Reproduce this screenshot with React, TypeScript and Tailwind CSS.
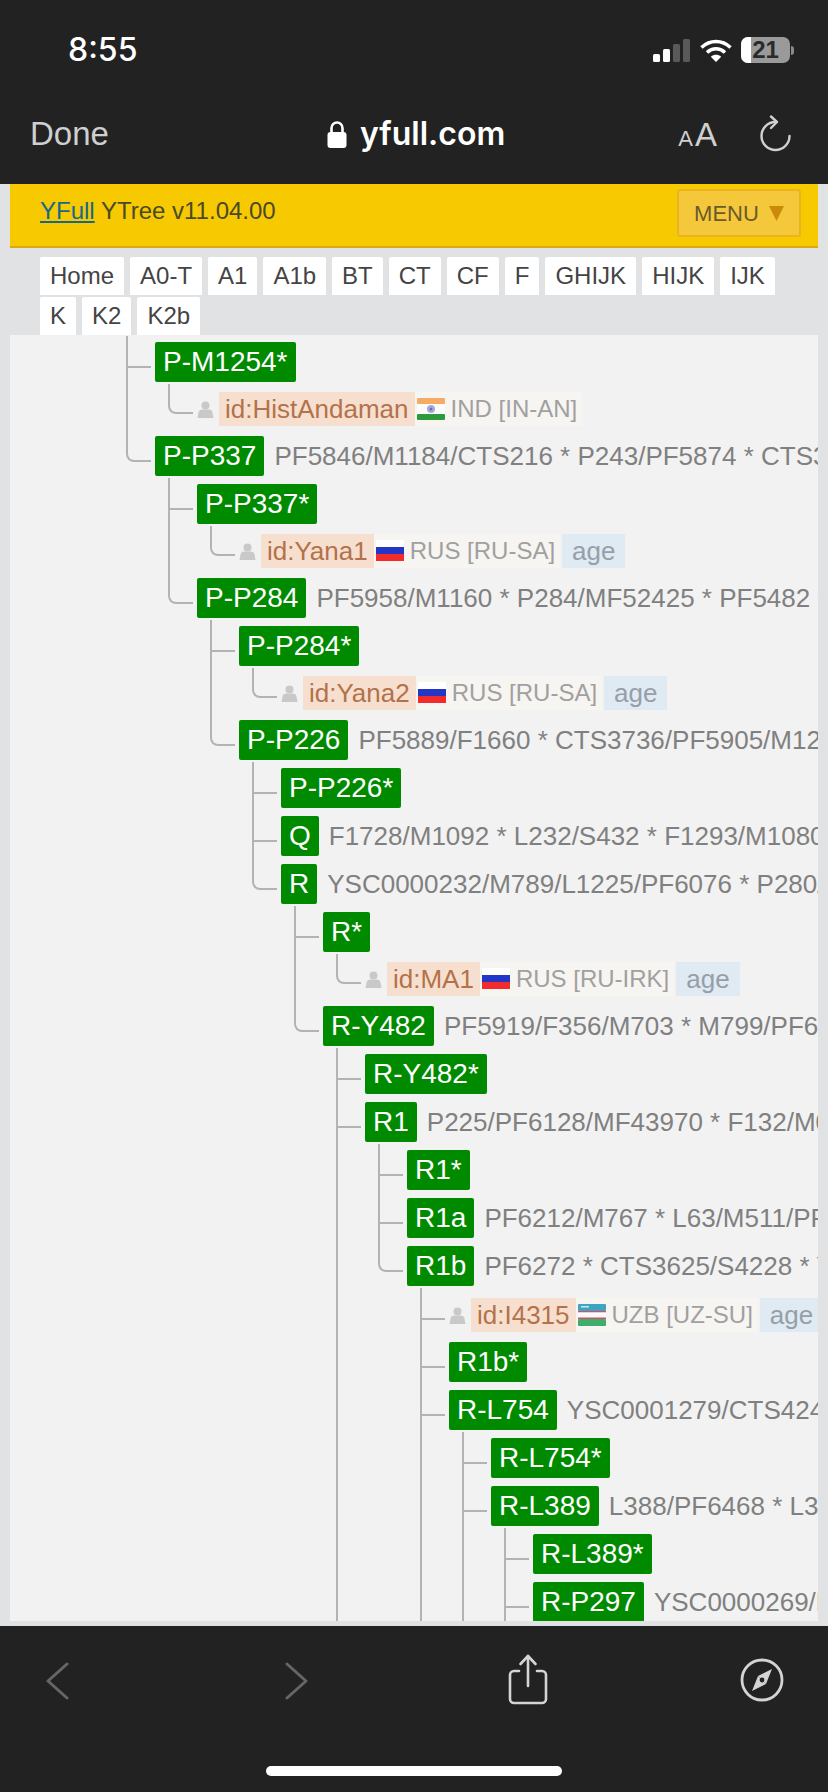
import React from 'react';

type Leaf = { id: string; flag: 'in' | 'ru' | 'uz'; place: string; age?: boolean };
type TreeNode = { name: string; snps?: string; leaf?: Leaf; children?: TreeNode[]; open?: boolean };

const TABS = [
  ['Home', 'A0-T', 'A1', 'A1b', 'BT', 'CT', 'CF', 'F', 'GHIJK', 'HIJK', 'IJK'],
  ['K', 'K2', 'K2b'],
];

const TREE: TreeNode[] = [
  { name: 'P-M1254*', leaf: { id: 'id:HistAndaman', flag: 'in', place: 'IND [IN-AN]' } },
  {
    name: 'P-P337',
    snps: 'PF5846/M1184/CTS216 * P243/PF5874 * CTS3',
    children: [
      { name: 'P-P337*', leaf: { id: 'id:Yana1', flag: 'ru', place: 'RUS [RU-SA]', age: true } },
      {
        name: 'P-P284',
        snps: 'PF5958/M1160 * P284/MF52425 * PF5482 * CTS',
        children: [
          { name: 'P-P284*', leaf: { id: 'id:Yana2', flag: 'ru', place: 'RUS [RU-SA]', age: true } },
          {
            name: 'P-P226',
            snps: 'PF5889/F1660 * CTS3736/PF5905/M12',
            children: [
              { name: 'P-P226*' },
              { name: 'Q', snps: 'F1728/M1092 * L232/S432 * F1293/M1080' },
              {
                name: 'R',
                snps: 'YSC0000232/M789/L1225/PF6076 * P280/',
                children: [
                  { name: 'R*', leaf: { id: 'id:MA1', flag: 'ru', place: 'RUS [RU-IRK]', age: true } },
                  {
                    name: 'R-Y482',
                    snps: 'PF5919/F356/M703 * M799/PF6',
                    children: [
                      { name: 'R-Y482*' },
                      {
                        name: 'R1',
                        open: true,
                        snps: 'P225/PF6128/MF43970 * F132/M0',
                        children: [
                          { name: 'R1*' },
                          { name: 'R1a', snps: 'PF6212/M767 * L63/M511/PF' },
                          {
                            name: 'R1b',
                            snps: 'PF6272 * CTS3625/S4228 * Y',
                            leaf: { id: 'id:I4315', flag: 'uz', place: 'UZB [UZ-SU]', age: true },
                            children: [
                              { name: 'R1b*' },
                              {
                                name: 'R-L754',
                                open: true,
                                snps: 'YSC0001279/CTS424',
                                children: [
                                  { name: 'R-L754*' },
                                  {
                                    name: 'R-L389',
                                    open: true,
                                    snps: 'L388/PF6468 * L3',
                                    children: [
                                      { name: 'R-L389*' },
                                      { name: 'R-P297', open: true, snps: 'YSC0000269/M' },
                                    ],
                                  },
                                ],
                              },
                            ],
                          },
                        ],
                      },
                    ],
                  },
                ],
              },
            ],
          },
        ],
      },
    ],
  },
];

function Flag({ code }: { code: Leaf['flag'] }) {
  return (
    <svg width="28" height="22" viewBox="0 0 28 22" className="shrink-0">
      {code === 'in' && (
        <>
          <rect y="0" width="28" height="6" rx="1" fill="#f5ab64" />
          <rect y="6" width="28" height="10" fill="#fbfbfb" />
          <rect y="16" width="28" height="6" rx="1" fill="#2f9a3c" />
          <circle cx="14" cy="11" r="4" fill="#a9a9d8" />
          <circle cx="14" cy="11" r="1.5" fill="#6c6cb8" />
        </>
      )}
      {code === 'ru' && (
        <>
          <rect y="0" width="28" height="7" fill="#ffffff" />
          <rect y="7" width="28" height="7" fill="#2336c6" />
          <rect y="14" width="28" height="7" fill="#f22c2c" />
        </>
      )}
      {code === 'uz' && (
        <>
          <rect y="0" width="28" height="7" rx="1" fill="#3da5c2" />
          <rect x="3" y="2" width="8" height="1.5" fill="#cfe8ef" />
          <rect y="7" width="28" height="1.5" fill="#d8505f" />
          <rect y="8.5" width="28" height="5" fill="#fbfbfb" />
          <rect y="13.5" width="28" height="1.5" fill="#d8505f" />
          <rect y="15" width="28" height="7" rx="1" fill="#3fae6c" />
        </>
      )}
    </svg>
  );
}

function PersonIcon() {
  return (
    <svg width="17" height="17" viewBox="0 0 17 17" className="shrink-0 mr-[5px]">
      <circle cx="8.5" cy="4.4" r="4" fill="#c9c9c9" />
      <path d="M0.5 17 L1.6 11 Q2.2 8.8 4.6 8.5 L12.4 8.5 Q14.8 8.8 15.4 11 L16.5 17 Z" fill="#c9c9c9" />
    </svg>
  );
}

// connector drawn over the left gutter of each tree row
function Connector({ last, leaf }: { last: boolean; leaf?: boolean }) {
  if (last) {
    return (
      <span
        className={
          leaf
            ? 'absolute left-[-29px] top-[-6px] h-[30px] w-[25px] rounded-bl-[8px] border-b-2 border-l-2 border-[#b3b3b3]'
            : 'absolute left-[-29px] top-[-6px] h-[32px] w-[25px] rounded-bl-[8px] border-b-2 border-l-2 border-[#b3b3b3]'
        }
      />
    );
  }
  return (
    <>
      <span className="absolute left-[-29px] top-[-6px] bottom-0 w-[2px] bg-[#b3b3b3]" />
      <span className="absolute left-[-29px] top-[24px] h-[2px] w-[25px] bg-[#b3b3b3]" />
    </>
  );
}

function LeafRow({ leaf, last }: { leaf: Leaf; last: boolean }) {
  return (
    <li className={last ? 'relative h-[46px] pt-[2px]' : 'relative h-[48px] pt-[4px]'}>
      <Connector last={last} leaf />
      <div className="flex h-[34px] items-center whitespace-nowrap">
        <PersonIcon />
        <span className="h-[34px] bg-[#f7dfd0] px-[6px] text-[26px] leading-[34px] text-[#b3724a]">{leaf.id}</span>
        <span className="flex h-[34px] items-center bg-[#f7f5f1] pl-[2px] pr-[5px]">
          <Flag code={leaf.flag} />
          <span className="ml-[6px] text-[24px] text-[#a0a0a0]">{leaf.place}</span>
        </span>
        {leaf.age && (
          <span className="ml-[2px] h-[34px] bg-[#dfeaf3] px-[10px] text-[26px] leading-[34px] text-[#969fa9]">age</span>
        )}
      </div>
    </li>
  );
}

function Branch({ node, last }: { node: TreeNode; last: boolean }) {
  const hasKids = !!node.children || !!node.leaf;
  return (
    <li className="relative">
      <Connector last={last && !node.open} />
      <div className="flex h-[48px] items-start whitespace-nowrap">
        <span className="h-[40px] rounded-[2px] bg-[#008a00] px-2 text-[28px] leading-[40px] text-white">{node.name}</span>
        {node.snps && <span className="ml-[10px] text-[26px] leading-[40px] text-[#808080]">{node.snps}</span>}
      </div>
      {hasKids && (
        <ul className="pl-[42px]">
          {node.leaf && <LeafRow leaf={node.leaf} last={!node.children} />}
          {node.children?.map((c, i) => (
            <Branch key={c.name} node={c} last={i === node.children!.length - 1} />
          ))}
        </ul>
      )}
    </li>
  );
}

function StatusIcons() {
  return (
    <div className="flex items-center">
      <svg width="37" height="23" viewBox="0 0 37 23">
        <rect x="0" y="15" width="7" height="8" rx="1.5" fill="#ffffff" />
        <rect x="10" y="10" width="7" height="13" rx="1.5" fill="#ffffff" />
        <rect x="20" y="5" width="7" height="18" rx="1.5" fill="#595959" />
        <rect x="30" y="0" width="7" height="23" rx="1.5" fill="#595959" />
      </svg>
      <svg width="32" height="23" viewBox="0 0 32 23" className="ml-[10px]" fill="none" stroke="#ffffff" strokeWidth="3.6">
        <path d="M1.5 8.5 C10 0.5 22 0.5 30.5 8.5" />
        <path d="M7 13.5 C12.5 8.5 19.5 8.5 25 13.5" />
        <path d="M16 23 L10.8 17.8 C14 15.2 18 15.2 21.2 17.8 Z" fill="#ffffff" stroke="none" />
      </svg>
      <div className="relative ml-[9px] flex h-[26px] w-[49px] items-center justify-center overflow-hidden rounded-[7px] bg-[#9a9a9a]">
        <span className="absolute inset-y-0 left-0 w-[10px] bg-white" />
        <span className="relative text-[24px] font-bold leading-none text-[#2a2a2a]">21</span>
      </div>
      <span className="ml-[1px] h-[9px] w-[3px] rounded-r-[3px] bg-[#8a8a8a]" />
    </div>
  );
}

export default function App() {
  return (
    <div className="flex h-[1792px] w-[828px] flex-col overflow-hidden bg-[#e0e2e4] font-['Liberation_Sans',Arial,sans-serif]">
      {/* Safari chrome */}
      <header className="h-[184px] shrink-0 bg-[#222222]">
        <div className="flex h-[100px] items-center justify-between pl-[68px] pr-[34px]">
          <span className="font-['Inter',sans-serif] text-[32px] font-medium text-white">8:55</span>
          <StatusIcons />
        </div>
        <div className="grid h-[68px] grid-cols-[297px_auto_1fr] items-center pl-[30px] pr-[38px]">
          <span className="text-[33px] text-[#cfcfcf]">Done</span>
          <div className="flex items-center">
            <svg width="20" height="27" viewBox="0 0 20 27">
              <path d="M4.5 12 V7 a5.5 5.5 0 0 1 11 0 V12" fill="none" stroke="#ffffff" strokeWidth="2.6" />
              <rect x="0.5" y="11" width="19" height="16" rx="3" fill="#ffffff" />
            </svg>
            <span className="ml-[13px] font-['Inter',sans-serif] text-[32px] font-semibold text-white">yfull.com</span>
          </div>
          <div className="flex items-center justify-end gap-[43px]">
            <div className="flex items-baseline text-[#cfcfcf]">
              <span className="text-[22px] leading-none">A</span>
              <span className="ml-[2px] text-[33px] leading-none">A</span>
            </div>
            <svg width="32" height="38" viewBox="0 0 32 38" fill="none" stroke="#cfcfcf" strokeWidth="2.4" strokeLinecap="round" strokeLinejoin="round" className="mr-[-2px]">
              <path d="M15.5 7 A14 14 0 1 0 29.5 21" />
              <path d="M11 1.5 L17 7 L11 13" />
            </svg>
          </div>
        </div>
      </header>

      <main className="mx-[10px] flex min-h-0 flex-1 flex-col pb-[5px]">
        {/* Yellow site bar */}
        <div className="flex h-[64px] shrink-0 items-center justify-between border-b-2 border-[#e0a80f] bg-[#f6c900] pb-[4px] pl-[30px] pr-[17px]">
          <p className="mt-[-4px] text-[24px] text-[#4a4a2a]">
            <a className="text-[#17688c] underline">YFull</a> YTree v11.04.00
          </p>
          <div className="flex h-[48px] w-[124px] items-center justify-center gap-[10px] rounded-[3px] border-2 border-[#e8b51e] bg-[#f5c83c]">
            <span className="text-[22px] text-[#6b5a2a]">MENU</span>
            <svg width="15" height="15" viewBox="0 0 15 15">
              <path d="M0 0 H15 L7.5 15 Z" fill="#cc8a0a" />
            </svg>
          </div>
        </div>

        {/* Tabs */}
        <nav className="flex shrink-0 flex-col gap-[2px] pl-[30px] pt-[9px]">
          {TABS.map((row, i) => (
            <div key={i} className="flex gap-[6px]">
              {row.map((t) => (
                <span key={t} className="h-[38px] rounded-t-[2px] bg-white px-[10px] text-[24px] leading-[38px] text-[#444444]">
                  {t}
                </span>
              ))}
            </div>
          ))}
        </nav>

        {/* Tree */}
        <section className="min-h-0 flex-1 overflow-hidden bg-[#f2f2f2] pl-[145px] pt-[7px]">
          <ul>
            {TREE.map((n, i) => (
              <Branch key={n.name} node={n} last={i === TREE.length - 1} />
            ))}
          </ul>
        </section>
      </main>

      {/* Safari bottom bar */}
      <footer className="flex h-[166px] shrink-0 flex-col items-center bg-[#222222]">
        <div className="flex h-[140px] w-full items-start pl-[45px] pt-[28px]">
          <svg width="24" height="38" viewBox="0 0 24 38" fill="none" stroke="#666666" strokeWidth="3" strokeLinecap="round" strokeLinejoin="round" className="mt-[8px]">
            <path d="M22 2 L3 19 L22 36" />
          </svg>
          <svg width="24" height="38" viewBox="0 0 24 38" fill="none" stroke="#666666" strokeWidth="3" strokeLinecap="round" strokeLinejoin="round" className="ml-[216px] mt-[8px]">
            <path d="M2 2 L21 19 L2 36" />
          </svg>
          <svg width="44" height="52" viewBox="0 0 44 52" fill="none" stroke="#d4d4d4" strokeWidth="2.6" strokeLinecap="round" strokeLinejoin="round" className="ml-[197px]">
            <path d="M13 17 H8 a4 4 0 0 0 -4 4 V45 a4 4 0 0 0 4 4 H36 a4 4 0 0 0 4 -4 V21 a4 4 0 0 0 -4 -4 H31" />
            <path d="M22 32 V2" />
            <path d="M14.5 10 L22 2 L29.5 10" />
          </svg>
          <svg width="44" height="44" viewBox="0 0 44 44" className="ml-[190px] mt-[4px]">
            <circle cx="22" cy="22" r="20" fill="none" stroke="#d4d4d4" strokeWidth="2.8" />
            <path d="M32 11 L18 18 L26 26 Z" fill="#d4d4d4" />
            <path d="M12 33 L18 18 L26 26 Z" fill="#d4d4d4" />
            <circle cx="22" cy="22" r="2.4" fill="#222222" />
          </svg>
        </div>
        <div className="h-[10px] w-[296px] rounded-full bg-white" />
      </footer>
    </div>
  );
}
